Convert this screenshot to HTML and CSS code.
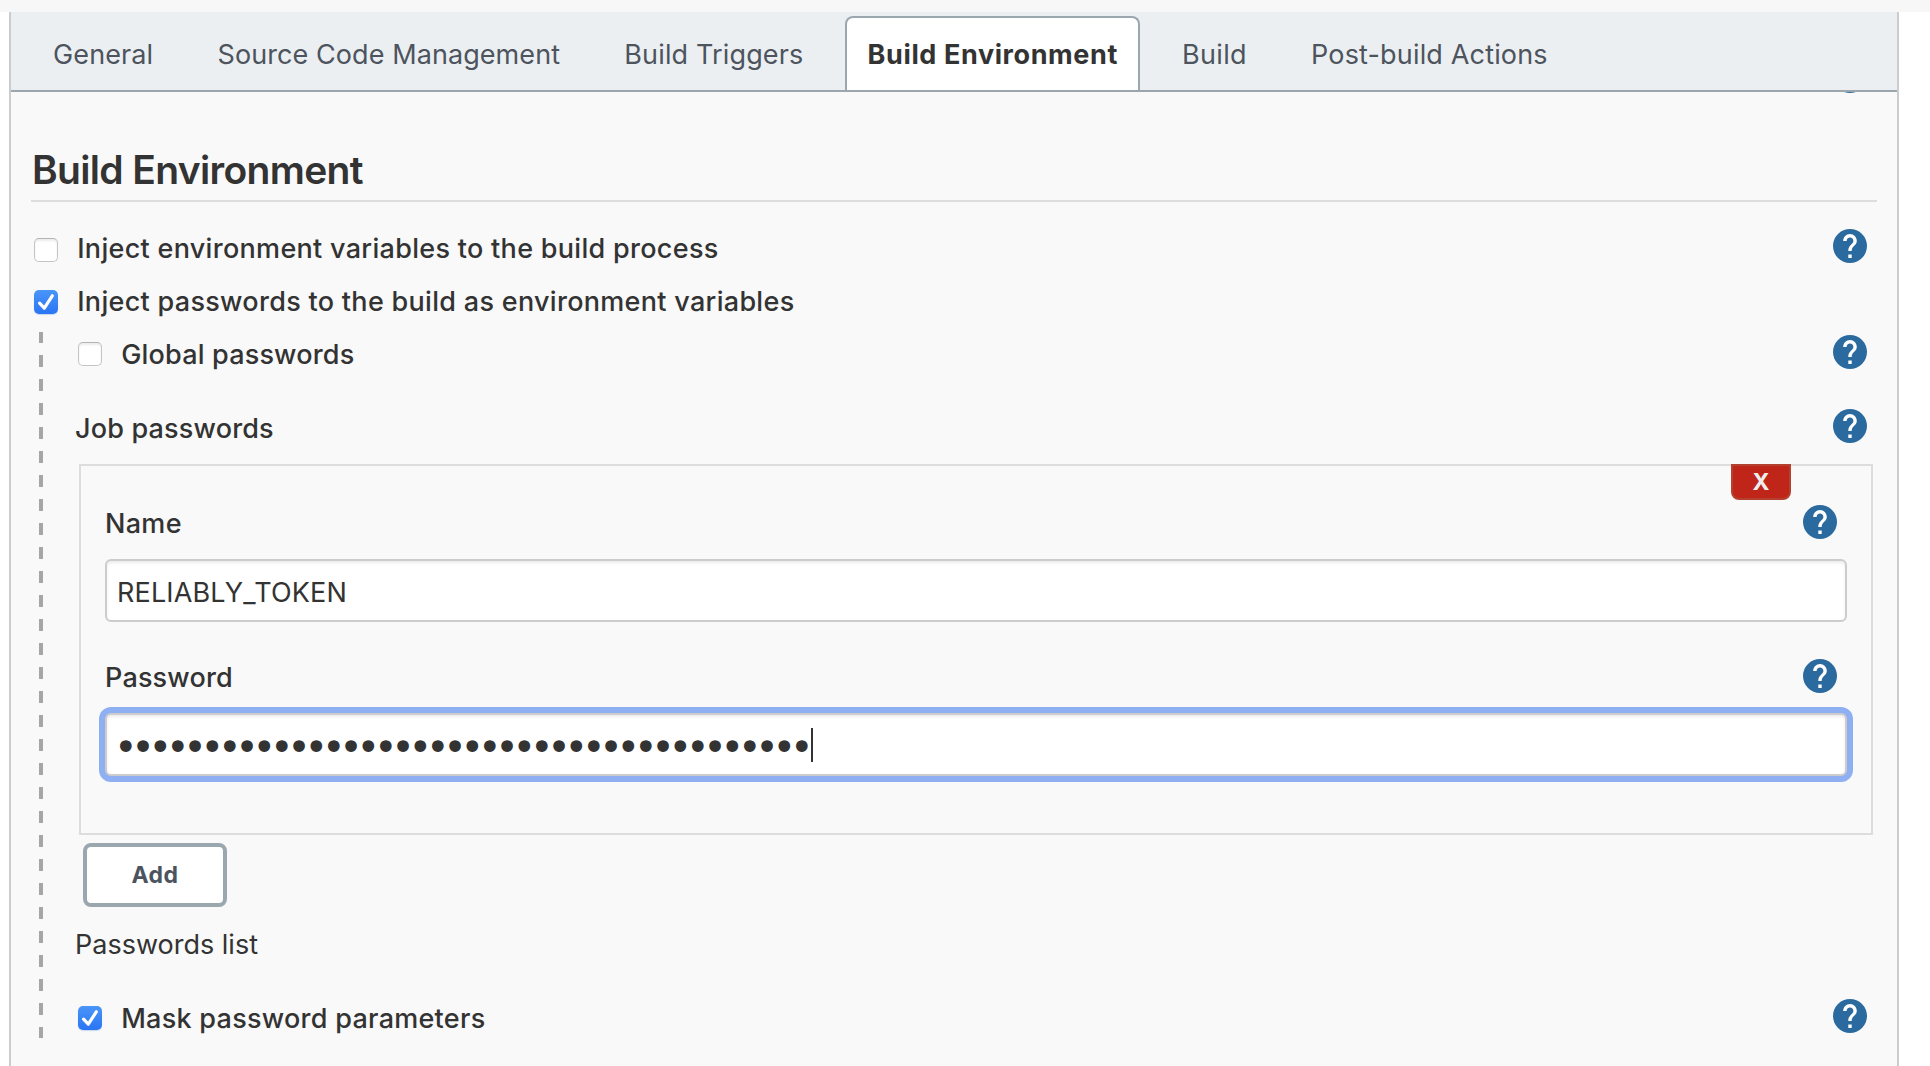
FILE: index.html
```html
<!DOCTYPE html>
<html lang="en">
<head>
<meta charset="utf-8">
<title>Build Environment</title>
<link rel="stylesheet" href="styles.css">
</head>
<body>
<svg class="defs" aria-hidden="true">
  <symbol id="help" viewBox="2 2 20 20"><circle cx="12" cy="12" r="10" fill="#2b6a9f"/><path fill="#fff" d="M13 19h-2v-2h2v2zm2.07-7.75l-.9.92C13.45 12.9 13 13.5 13 15h-2v-.5c0-1.1.45-2.1 1.17-2.83l1.24-1.26c.37-.36.59-.86.59-1.41 0-1.1-.9-2-2-2s-2 .9-2 2H8c0-2.21 1.79-4 4-4s4 1.79 4 4c0 .88-.36 1.68-.93 2.25z"/></symbol>
  <symbol id="tick" viewBox="0 0 24 24"><path fill="none" stroke="#fff" stroke-width="3.2" stroke-linecap="round" stroke-linejoin="round" d="M5.6 13.2L10.3 18.2L18.3 5.8"/></symbol>
</svg>
<main class="panel">
  <nav class="tabs">
    <a class="tab ls-general">General</a>
    <a class="tab ls-scm">Source Code Management</a>
    <a class="tab ls-triggers">Build Triggers</a>
    <a class="tab active">Build Environment</a>
    <a class="tab ls-build">Build</a>
    <a class="tab ls-post">Post-build Actions</a>
  </nav>
  <section class="content">
    <div class="scrolled"><svg class="help"><use href="#help"/></svg></div>
    <h2 class="title">Build Environment</h2>
    <div class="row first">
      <span class="box"></span><label class="label">Inject environment variables to the build process</label>
      <svg class="help"><use href="#help"/></svg>
    </div>
    <div class="row second">
      <span class="box on"><svg class="tick"><use href="#tick"/></svg></span><label class="label">Inject passwords to the build as environment variables</label>
    </div>
    <div class="nested">
      <div class="row global">
        <span class="box"></span><label class="label tight">Global passwords</label>
        <svg class="help"><use href="#help"/></svg>
      </div>
      <div class="row job">
        <label class="label tight">Job passwords</label>
        <svg class="help"><use href="#help"/></svg>
      </div>
      <div class="card">
        <button class="remove">X</button>
        <div class="field-head">
          <label class="label">Name</label>
          <svg class="help"><use href="#help"/></svg>
        </div>
        <div class="input"><span class="value">RELIABLY_TOKEN</span></div>
        <div class="field-head second-field">
          <label class="label tight">Password</label>
          <svg class="help"><use href="#help"/></svg>
        </div>
        <div class="input focus"><span class="dots">••••••••••••••••••••••••••••••••••••••••</span><span class="caret"></span></div>
      </div>
      <button class="add">Add</button>
      <div class="list-label">Passwords list</div>
      <div class="row mask">
        <span class="box on"><svg class="tick"><use href="#tick"/></svg></span><label class="label">Mask password parameters</label>
        <svg class="help"><use href="#help"/></svg>
      </div>
    </div>
  </section>
</main>
</body>
</html>
```
FILE: styles.css
```css
* { box-sizing: border-box; }
html { background: #fff; }
body {
  margin: 0;
  height: 1066px;
  overflow: hidden;
  border-top: 12px solid #f7f7f7;
  font: 400 27px/40px Inter, "Liberation Sans", sans-serif;
  color: #333;
}
.defs { display: none; }
.panel {
  height: 1054px;
  margin: 0 31px 0 9px;
  border: solid #ccc;
  border-width: 0 2px;
  background: #f9f9f9;
}
.tabs {
  display: flex;
  align-items: flex-end;
  gap: 19.2px;
  height: 80px;
  padding-left: 19.5px;
  border-bottom: 2px solid #9ba7ac;
  background: #ebeff2;
  color: #4d545d;
}
.tab {
  height: 74px;
  padding: 0 20.5px;
  border: 2px solid transparent;
  border-bottom: 0;
  border-radius: 8px 8px 0 0;
  line-height: 74px;
  white-space: nowrap;
}
.tab.active {
  border-color: #9ba7af;
  background: #fff;
  color: #333;
  font-weight: 700;
  letter-spacing: .6px;
}
.ls-general { letter-spacing: .12px; }
.ls-scm { letter-spacing: .08px; }
.ls-triggers { letter-spacing: .14px; }
.ls-build { letter-spacing: .3px; }
.ls-post { letter-spacing: .16px; }

.content { padding: 0 20px; }
.scrolled { height: 1px; overflow: hidden; display: flex; align-items: flex-end; }
.title {
  margin: 51px 0 0;
  padding: 0 0 4px 1px;
  border-bottom: 2px solid #ddd;
  font-size: 39px;
  font-weight: 600;
  line-height: 52px;
  letter-spacing: -.66px;
}
.row { display: flex; align-items: center; padding-left: 3px; }
.first { height: 53px; margin-top: 20px; }
.second { height: 53px; }
.first .box { margin-top: 3px; }
.second .box { margin-top: 1px; }
.global .box { margin-bottom: 1px; }
.label { font-weight: 500; letter-spacing: .3px; white-space: nowrap; }
.tight { letter-spacing: .18px; }
.help { width: 34px; height: 34px; flex: none; margin: 0 10px 4px auto; }
.first .help, .global .help { margin-bottom: 5px; }
.scrolled .help { margin-bottom: .5px; }

.box {
  width: 24px;
  height: 24px;
  flex: none;
  margin-right: 19.2px;
  border: 1px solid #c4c4c4;
  border-top-color: #b4b4b4;
  border-radius: 5px;
  background: #fff;
  box-shadow: inset 0 2px 2px #ececec;
}
.box.on { border: 0; background: linear-gradient(#4a95f8, #2a75f3); box-shadow: 0 1px 1px #c9d8ee; }
.tick { display: block; width: 24px; height: 24px; }

.nested {
  margin: 4px 0 0 8px;
  padding-left: 36px;
  height: 706px;
  background: repeating-linear-gradient(#a6a6a6 0 12px, transparent 12px 24px) 0 -1px / 4px 720px no-repeat;
}
.global { height: 45px; }
.job { height: 46px; margin-top: 28px; padding-left: 0; }
.job .label, .field-head .label, .mask .label { padding-top: 2px; }
.card {
  position: relative;
  height: 371px;
  margin: 13px 4px 0;
  padding: 33px 24px 0;
  border: 2px solid #ddd;
}
.remove {
  position: absolute;
  top: -2px;
  right: 80px;
  width: 60px;
  height: 36px;
  padding: 0;
  border: 2px solid #b4412f;
  border-radius: 0 0 8px 8px;
  background: #bf2519;
  color: #eee;
  font: 700 23px/32px Inter, sans-serif;
}
.field-head { display: flex; align-items: center; height: 48px; }
.field-head .help { margin-bottom: 2px; }
.second-field { margin-top: 31px; }
.input {
  display: flex;
  align-items: center;
  height: 63px;
  margin-top: 12px;
  padding: 0 9.5px;
  border: 2px solid #ccc;
  border-radius: 6px;
  background: #fff;
  box-shadow: inset 0 2px 3px #ececec;
}
.input.focus { box-shadow: 0 0 0 6px #8eb0f2, inset 0 2px 3px #ececec; }
.value { padding: 4px 0 0 .5px; letter-spacing: .15px; }
.dots {
  margin-left: -2.6px;
  padding-top: 5px;
  font: 40px/40px "DejaVu Sans", sans-serif;
  letter-spacing: -6.26px;
  white-space: nowrap;
}
.caret { width: 2px; height: 34px; margin-left: 4px; background: #333; }
.add {
  display: block;
  width: 144px;
  height: 64px;
  margin: 8px 0 0 8px;
  padding: 0;
  border: 4px solid #9ba7af;
  border-radius: 8px;
  background: #fff;
  color: #4b545e;
  font: 700 23px/56px Inter, sans-serif;
  letter-spacing: .4px;
}
.list-label { height: 46px; margin-top: 14px; line-height: 48px; }
.mask { height: 40px; margin-top: 31px; }
.mask .label { letter-spacing: .27px; }
```
